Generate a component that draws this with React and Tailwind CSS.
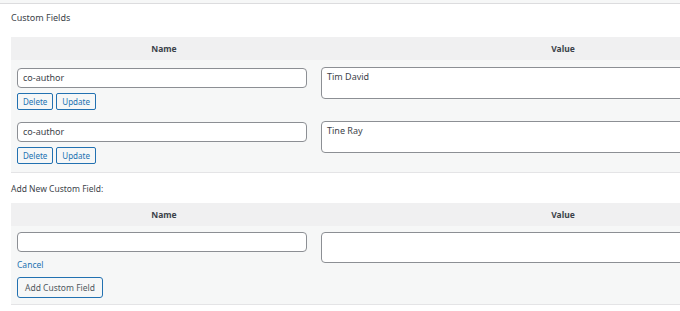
import React from "react";

const font = { fontFamily: '"Noto Sans", "Open Sans", Arial, sans-serif' };

function SmallBtn({ children }) {
  return (
    <button className="h-[17px] px-[5px] border border-[#2271b1] rounded-[2px] bg-[#f6f7f7] text-[#2271b1] text-[8px] leading-[15px]">
      {children}
    </button>
  );
}

function Header() {
  return (
    <div className="grid grid-cols-[306px_492px] h-[23px] bg-[#f0f0f1] text-[8.5px] font-bold text-[#3c434a] leading-[23px] text-center">
      <div>Name</div>
      <div>Value</div>
    </div>
  );
}

function Row({ name, value, last }) {
  return (
    <div className={`grid grid-cols-[306px_492px] ${last ? "pb-[8px]" : "pb-[4px]"}`}>
      <div className="pl-[6px] pr-[10px] pt-[8px]">
        <div className="h-[20px] border border-[#8c8f94] rounded-[4px] bg-white px-[5px] text-[9px] leading-[18px] text-[#3c434a]">
          {name}
        </div>
        <div className="flex gap-[3px] mt-[5px]">
          <SmallBtn>Delete</SmallBtn>
          <SmallBtn>Update</SmallBtn>
        </div>
      </div>
      <div className="pl-[4px] pt-[7px]">
        <div className="h-[32px] border border-[#8c8f94] rounded-[4px] bg-white px-[5px] pt-[2px] text-[9px] leading-[14px] text-[#3c434a]">
          {value}
        </div>
      </div>
    </div>
  );
}

export default function App() {
  return (
    <div className="w-[680px] h-[311px] bg-white overflow-hidden" style={font}>
      <div className="h-[3px] bg-[#f6f7f7] border-b border-[#dcdcde] box-content" />
      <div className="pl-[11px]">
        <div className="mt-[6px] h-[16px] leading-[16px] text-[9px] text-[#3c434a]">Custom Fields</div>
        <div className="mt-[11px] w-[800px] bg-[#f6f7f7] border-b border-[#e4e4e6]">
          <Header />
          <Row name="co-author" value="Tim David" />
          <Row name="co-author" value="Tine Ray" last />
        </div>
        <div className="mt-[8px] h-[16px] leading-[16px] text-[8.5px] text-[#3c434a]">Add New Custom Field:</div>
        <div className="mt-[6px] w-[800px] bg-[#f6f7f7] border-b border-[#e4e4e6]">
          <Header />
          <div className="grid grid-cols-[306px_492px] pb-[6px]">
            <div className="pl-[6px] pr-[10px] pt-[6px]">
              <div className="h-[20px] border border-[#8c8f94] rounded-[4px] bg-white" />
              <div className="mt-[7px] h-[12px] leading-[12px] text-[8.5px] text-[#2271b1]">Cancel</div>
              <button className="mt-[6px] h-[21px] px-[7px] border border-[#2271b1] rounded-[3px] bg-[#f6f7f7] text-[#50575e] text-[8.5px] leading-[19px]">
                Add Custom Field
              </button>
            </div>
            <div className="pl-[4px] pt-[6px]">
              <div className="h-[31px] border border-[#8c8f94] rounded-[4px] bg-white" />
            </div>
          </div>
        </div>
      </div>
    </div>
  );
}
